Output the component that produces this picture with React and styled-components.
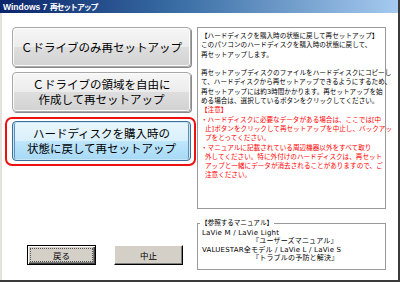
import styled, { createGlobalStyle } from 'styled-components';

const GlobalStyle = createGlobalStyle`
  html, body {
    margin: 0;
    padding: 0;
    background: #ffffff;
  }
`;

const infoLines = [
  '【ハードディスクを購入時の状態に戻して再セットアップ】',
  'このパソコンのハードディスクを購入時の状態に戻して、',
  '再セットアップします。',
  '',
  '再セットアップディスクのファイルをハードディスクにコピーし',
  'て、ハードディスクから再セットアップできるようにするため、',
  '再セットアップには約3時間かかります。再セットアップを始',
  'める場合は、選択しているボタンをクリックしてください。',
];

const warnLines = [
  { text: '【注意】' },
  { text: '・ハードディスクに必要なデータがある場合は、ここでは[中' },
  { text: '止]ボタンをクリックして再セットアップを中止し、バックアッ', indent: true },
  { text: 'プをとってください。', indent: true },
  { text: '・マニュアルに記載されている周辺機器以外をすべて取り' },
  { text: '外してください。特に外付けのハードディスクは、再セット', indent: true },
  { text: 'アップと一緒にデータが消去されることがありますので、ご', indent: true },
  { text: '注意ください。', indent: true },
];

const manuals = [
  { text: 'LaVie M / LaVie Light' },
  { text: '『ユーザーズマニュアル』', indent: true },
  { text: 'VALUESTAR全モデル / LaVie L / LaVie S' },
  { text: '『トラブルの予防と解決』', indent: true },
];

export default function App() {
  return (
    <>
      <GlobalStyle />
      <Window>
        <TitleBar>
          Windows 7 <TitleJa>再セットアップ</TitleJa>
        </TitleBar>
        <Body>
          <LeftColumn>
            <ButtonStack>
              <BigButton>Ｃドライブのみ再セットアップ</BigButton>
              <BigButton>
                Ｃドライブの領域を自由に
                <br />
                作成して再セットアップ
              </BigButton>
              <Highlight>
                <BigButton $selected>
                  ハードディスクを購入時の
                  <br />
                  状態に戻して再セットアップ
                </BigButton>
              </Highlight>
            </ButtonStack>
            <BottomRow>
              <ClassicButton $default>
                <FocusRing $focused>戻る</FocusRing>
              </ClassicButton>
              <ClassicButton>
                <FocusRing>中止</FocusRing>
              </ClassicButton>
            </BottomRow>
          </LeftColumn>
          <RightColumn>
            <InfoBox>
              {infoLines.map((line, i) => (
                <Line key={i}>{line || '\u00a0'}</Line>
              ))}
              {warnLines.map((line, i) => (
                <Line key={'w' + i} $red $indent={line.indent}>
                  {line.text}
                </Line>
              ))}
            </InfoBox>
            <ManualBox>
              <Legend>【参照するマニュアル】</Legend>
              {manuals.map((m, i) => (
                <ManualLine key={i} $indent={m.indent}>
                  {m.text}
                </ManualLine>
              ))}
            </ManualBox>
          </RightColumn>
        </Body>
      </Window>
    </>
  );
}

const smallFont = `'DejaVu Sans', 'Noto Sans CJK JP', sans-serif`;

const Window = styled.div`
  width: 400px;
  height: 282px;
  box-sizing: border-box;
  display: flex;
  flex-direction: column;
  background: #ffffff;
  border-right: 2px solid #3a3a3a;
  border-bottom: 2px solid #3a3a3a;
  overflow: hidden;
`;

const TitleBar = styled.div`
  height: 13px;
  flex-shrink: 0;
  display: flex;
  align-items: center;
  padding-left: 3px;
  background: linear-gradient(to right, #0a246a 0%, #3a6ea5 45%, #a6caf0 100%);
  color: #ffffff;
  font-family: 'Liberation Sans', 'Noto Sans CJK JP', sans-serif;
  font-weight: bold;
  font-size: 8.5px;
  white-space: pre;
`;

const TitleJa = styled.span`
  font-size: 8px;
  letter-spacing: -1.2px;
`;

const Body = styled.div`
  flex: 1;
  display: flex;
  gap: 6px;
  padding: 14px 10px 15px 10px;
  border-left: 2px solid #e4e2dc;
  min-height: 0;
`;

const LeftColumn = styled.div`
  width: 179px;
  display: flex;
  flex-direction: column;
  justify-content: space-between;
`;

const ButtonStack = styled.div`
  display: flex;
  flex-direction: column;
  gap: 5px;
`;

const BigButton = styled.div`
  height: 40px;
  box-sizing: border-box;
  display: flex;
  align-items: center;
  justify-content: center;
  text-align: center;
  border-radius: 4px;
  font-family: 'Noto Sans CJK JP', sans-serif;
  font-size: 11.5px;
  line-height: 15px;
  color: #000000;
  white-space: nowrap;
  border: 1px solid ${({ $selected }) => ($selected ? '#3c6f9a' : '#a8a8a8')};
  background: ${({ $selected }) =>
    $selected
      ? 'linear-gradient(#eaf6fd 0%, #d9f0fc 50%, #bee6fd 51%, #a7d9f5 100%)'
      : 'linear-gradient(#f6f6f6 0%, #ececec 50%, #dedede 51%, #d2d2d2 100%)'};
  box-shadow: ${({ $selected }) =>
    $selected
      ? 'inset 0 0 0 1px #c8e6f8, inset 2px 0 0 #5f8fb8, inset -2px 0 0 #5f8fb8'
      : 'inset 0 0 0 1px #fcfcfc, 1px 1px 0 #8a8a8a'};
`;

const Highlight = styled.div`
  margin: 0 -5px -5px -7px;
  padding: 2px 3px 3px 5px;
  border: 2px solid #ee1111;
  border-radius: 7px;
`;

const BottomRow = styled.div`
  display: flex;
  gap: 18px;
  padding-left: 15px;
`;

const ClassicButton = styled.div`
  width: 69px;
  height: 20px;
  box-sizing: border-box;
  display: flex;
  padding: 2px;
  background: #d4d0c8;
  font-family: 'Noto Sans CJK JP', sans-serif;
  font-size: 8.5px;
  color: #000000;
  border: 1px solid ${({ $default }) => ($default ? '#000000' : '#ffffff')};
  border-right-color: #000000;
  border-bottom-color: #000000;
  box-shadow: ${({ $default }) =>
    $default
      ? 'inset 1px 1px 0 #ffffff, inset -1px -1px 0 #404040, inset -2px -2px 0 #808080'
      : 'inset -1px -1px 0 #808080'};
`;

const FocusRing = styled.span`
  flex: 1;
  display: flex;
  align-items: center;
  justify-content: center;
  border: 1px dotted ${({ $focused }) => ($focused ? '#555555' : 'transparent')};
`;

const RightColumn = styled.div`
  width: 189px;
  display: flex;
  flex-direction: column;
  gap: 10px;
`;

const InfoBox = styled.div`
  height: 182px;
  flex-shrink: 0;
  box-sizing: border-box;
  border: 1px solid #9a9a9a;
  padding: 4px 3px;
  font-family: ${smallFont};
  font-size: 6.6px;
  line-height: 9.3px;
`;

const Line = styled.div`
  white-space: nowrap;
  color: ${({ $red }) => ($red ? '#ff0000' : '#000000')};
  padding-left: ${({ $indent }) => ($indent ? '4px' : '0')};
`;

const ManualBox = styled.fieldset`
  margin: 0;
  padding: 1px 4px 6px 4px;
  border: 1px solid #9a9a9a;
  font-family: ${smallFont};
  font-size: 7px;
  letter-spacing: 0.2px;
  line-height: 8.5px;
  color: #000000;
`;

const Legend = styled.legend`
  padding: 0 1px;
  margin-left: -2px;
  letter-spacing: 0;
  font-size: 6.6px;
`;

const ManualLine = styled.div`
  white-space: nowrap;
  padding-left: ${({ $indent }) => ($indent ? '50px' : '0')};
`;
